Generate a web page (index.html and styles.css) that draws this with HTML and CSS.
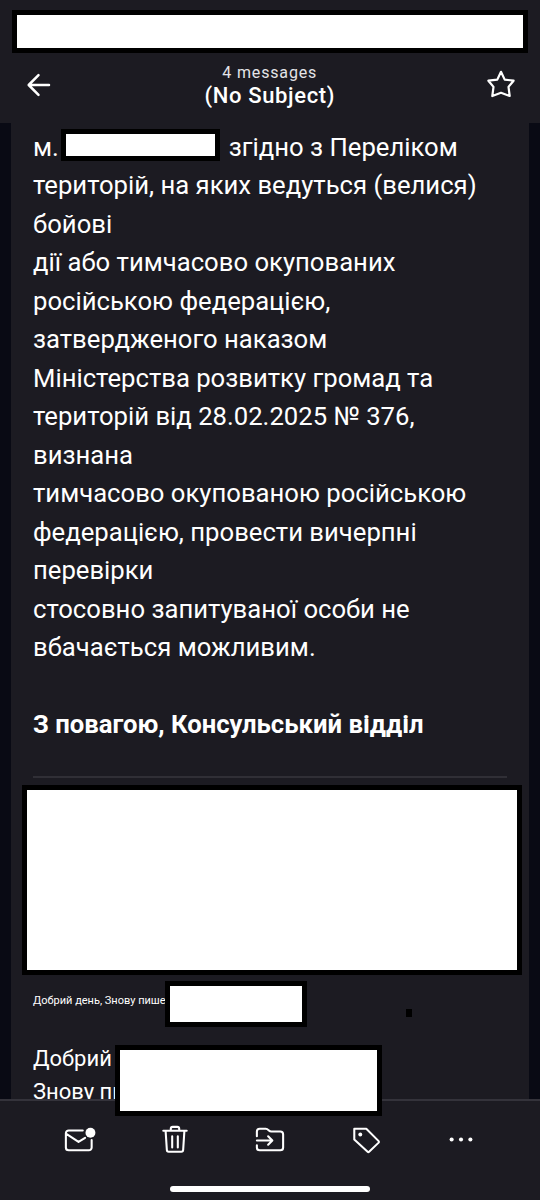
FILE: index.html
```html
<!DOCTYPE html>
<html lang="uk">
<head>
    <meta charset="UTF-8">
    <meta name="viewport" content="width=device-width, initial-scale=1.0">
    <title>(No Subject)</title>
    <link rel="stylesheet" href="styles.css">
</head>
<body>
    <header>
        <div class="mask status-mask"></div>
        <div class="title-bar">
            <svg class="back" viewBox="0 0 24 24"><path d="M22 12H2M11.5 2.2 1.7 12l9.8 9.8"/></svg>
            <div class="titles">
                <p class="count">4 messages</p>
                <h1>(No Subject)</h1>
            </div>
            <svg class="star" viewBox="0 0 28 28"><path d="M14 1.8 17.7 9.6 26.6 10.7 21.5 16.9 22.7 26 14 22.8 5.3 26 6.5 16.9 1.4 10.7 10.3 9.6z"/></svg>
        </div>
    </header>
    <main>
        <article>
            <p class="message">м.<span class="mask name-mask"></span>згідно з Переліком<br>
            територій, на яких ведуться (велися)<br>
            бойові<br>
            дії або тимчасово окупованих<br>
            російською федерацією,<br>
            затвердженого наказом<br>
            Міністерства розвитку громад та<br>
            територій від 28.02.2025 № 376,<br>
            визнана<br>
            тимчасово окупованою російською<br>
            федерацією, провести вичерпні<br>
            перевірки<br>
            стосовно запитуваної особи не<br>
            вбачається можливим.</p>
            <p class="signature">З повагою, Консульський відділ</p>
            <hr>
            <div class="mask sender-mask"></div>
            <div class="preview">
                <span>Добрий день, Знову пише</span>
                <div class="mask preview-mask"></div>
                <i class="spot"></i>
            </div>
            <div class="reply">
                <p>Добрий<br>Знову пи</p>
                <div class="mask reply-mask"></div>
            </div>
        </article>
    </main>
    <footer>
        <div class="toolbar">
            <svg viewBox="0 0 32 32"><path d="M20 5.8H5a3 3 0 0 0-3 3v15.2a3 3 0 0 0 3 3h21.5a3 3 0 0 0 3-3v-8M2.5 9.5 15.5 18l7-4.3"/><circle class="fill" cx="28.2" cy="8.2" r="5.3"/></svg>
            <svg viewBox="0 0 32 32"><path d="M3.5 6.2h25M11.5 6V4a2 2 0 0 1 2-2h5a2 2 0 0 1 2 2v2M6 6.5l1.3 20a2 2 0 0 0 2 2h13.4a2 2 0 0 0 2-2L26 6.5M13 12v12M19 12v12"/></svg>
            <svg viewBox="0 0 32 32"><path d="M2 12V7a3 3 0 0 1 3-3h6.5c3 0 3 3 6 3H27a3 3 0 0 1 3 3v14a3 3 0 0 1-3 3H5a3 3 0 0 1-3-3V21.5M2 16.5h16M14 12l4.5 4.5L14 21"/></svg>
            <svg viewBox="0 0 32 32"><path d="M3.5 4h12.8L29.5 17.2a1.2 1.2 0 0 1 0 1.6l-10.2 9.8a1.2 1.2 0 0 1-1.6 0L3.5 15.5z"/><circle class="fill" cx="9.9" cy="10.2" r="2.1"/></svg>
            <svg viewBox="0 0 32 32"><g class="fill"><circle cx="6" cy="15.5" r="2.2"/><circle cx="16" cy="15.5" r="2.2"/><circle cx="26" cy="15.5" r="2.2"/></g></svg>
        </div>
        <div class="home-bar"></div>
    </footer>
</body>
</html>
```
FILE: styles.css
```css
* {
    box-sizing: border-box;
}
body {
    margin: 0;
    height: 1200px;
    display: flex;
    flex-direction: column;
    overflow: hidden;
    font-family: Roboto, "Noto Sans", sans-serif;
    background-color: #1c1b22;
    color: #fff;
}
p, h1 {
    margin: 0;
}
svg {
    overflow: visible;
    fill: none;
    stroke: #fff;
    stroke-width: 2.2;
    stroke-linecap: round;
    stroke-linejoin: round;
}
.fill {
    fill: #fff;
    stroke: none;
}
.mask {
    background-color: #fff;
    border: 5px solid #000;
}
header {
    height: 123px;
    padding-top: 10px;
}
.status-mask {
    height: 43px;
    margin: 0 12px;
}
.title-bar {
    display: flex;
    justify-content: space-between;
    padding: 10px 24.5px 0 27px;
}
.back {
    width: 24px;
    height: 24px;
    margin-top: 10px;
    stroke-width: 2.5;
}
.star {
    width: 28px;
    height: 28px;
    margin-top: 7px;
}
.titles {
    padding-left: 1px;
    text-align: center;
}
.count {
    font-size: 16px;
    line-height: 19px;
    letter-spacing: 0.85px;
    color: #e4e4e8;
}
h1 {
    font-size: 22px;
    line-height: 28px;
    font-weight: 500;
    letter-spacing: 0.65px;
}
main {
    height: 976px;
    padding: 0 11px;
    background-color: #090a14;
}
article {
    height: 976px;
    padding: 4.5px 22px 0;
    background-color: #1c1b22;
}
.message, .signature {
    font-size: 25.67px;
    line-height: 38.5px;
    white-space: nowrap;
}
.name-mask {
    display: inline-block;
    width: 159px;
    height: 32px;
    margin: -4px 9px 4px 2px;
    vertical-align: middle;
}
.signature {
    padding-top: 38.5px;
    font-weight: 700;
}
hr {
    height: 2px;
    margin: 32px 0 7px;
    border: 0;
    background-color: #302f36;
}
.sender-mask {
    height: 190px;
    margin: 0 -15px 0 -11px;
}
.preview {
    display: flex;
    height: 70px;
    padding-top: 6px;
}
.preview span {
    width: 132px;
    padding-top: 12px;
    font-size: 11px;
    line-height: 15px;
    white-space: nowrap;
}
.preview-mask {
    width: 142px;
    height: 46px;
}
.spot {
    width: 6px;
    height: 8px;
    margin: 28px 0 0 99px;
    background-color: #000;
}
.reply {
    display: flex;
}
.reply p {
    width: 82px;
    margin-top: -3px;
    font-size: 22px;
    line-height: 33px;
    white-space: nowrap;
}
/* the mask hangs over the footer */
.reply-mask {
    position: relative;
    z-index: 2;
    width: 267px;
    height: 71px;
    flex-shrink: 0;
}
footer {
    position: relative;
    z-index: 1;
    height: 101px;
    border-top: 2px solid #34333b;
    background-color: #1c1b22;
}
.toolbar {
    display: flex;
    justify-content: space-between;
    padding: 24px 64px 0;
}
.toolbar svg {
    width: 30px;
    height: 30px;
}
.home-bar {
    width: 200px;
    height: 6px;
    margin: 31px auto 0;
    border-radius: 3px;
    background-color: #fff;
}
```
